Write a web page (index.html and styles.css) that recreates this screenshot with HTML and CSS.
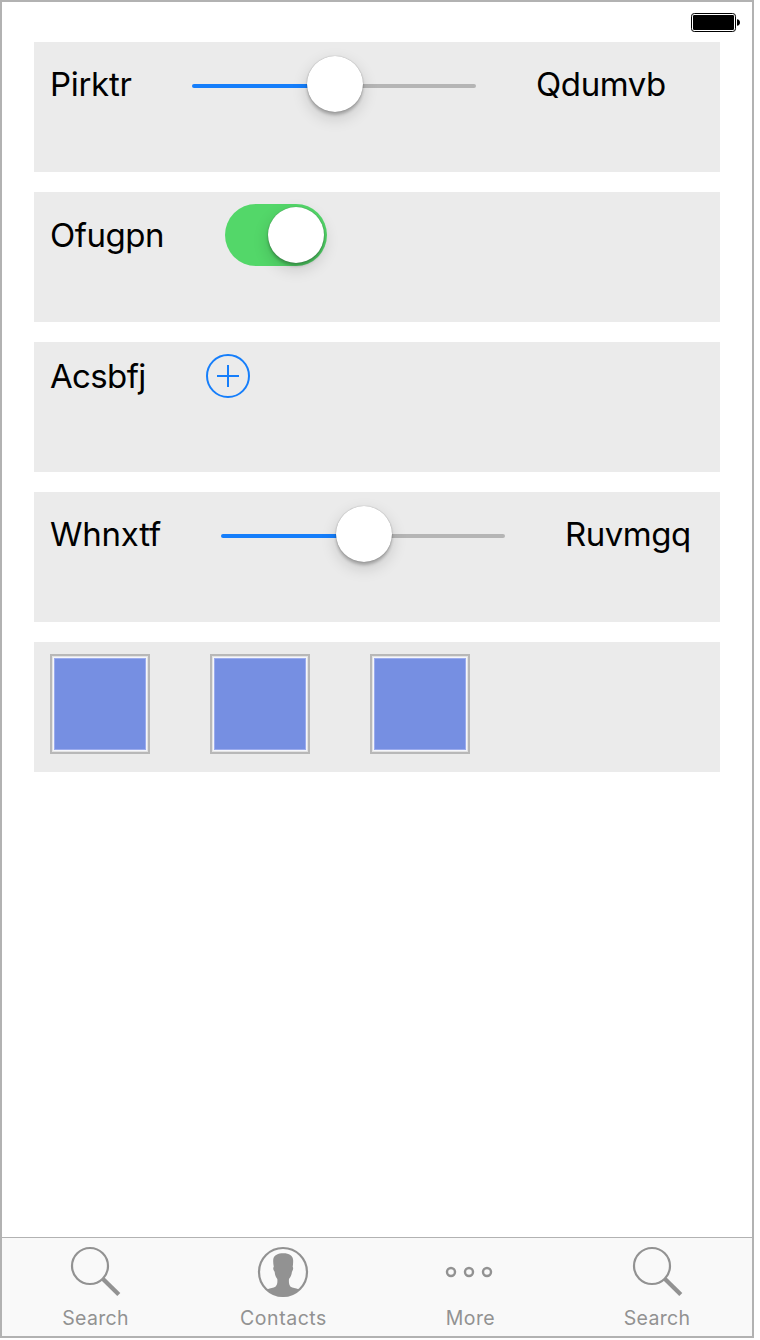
FILE: index.html
```html
<!DOCTYPE html>
<html lang="en">
<head>
<meta charset="utf-8">
<title>Controls</title>
<link rel="stylesheet" href="styles.css">
</head>
<body>
<div class="screen">
  <header class="status">
    <svg width="50" height="20" viewBox="0 0 50 20">
      <rect x=".5" y=".5" width="44" height="18" rx="2.8" fill="#fff" stroke="#000"/>
      <rect x="2" y="2" width="41" height="15" rx="1.2"/>
      <path d="M46 6.2c1.8.2 3 1.4 3 3.3s-1.200 3.100-3 3.300z"/>
    </svg>
  </header>
  <main class="rows">
    <section class="row">
      <span class="label w-pirktr">Pirktr</span>
      <div class="slider"><div class="track"></div><div class="thumb"></div></div>
      <span class="label w-qdumvb">Qdumvb</span>
    </section>
    <section class="row">
      <span class="label w-ofugpn">Ofugpn</span>
      <div class="switch"><div class="thumb knob"></div></div>
    </section>
    <section class="row">
      <span class="label w-acsbfj">Acsbfj</span>
      <svg class="add" width="44" height="44" viewBox="0 0 44 44" fill="none" stroke="#157efb" stroke-width="2">
        <circle cx="22" cy="22" r="21"/><path d="M22 11v22M11 22h22"/>
      </svg>
    </section>
    <section class="row">
      <span class="label w-whnxtf">Whnxtf</span>
      <div class="slider"><div class="track"></div><div class="thumb"></div></div>
      <span class="label w-ruvmgq">Ruvmgq</span>
    </section>
    <section class="row">
      <div class="swatch"></div><div class="swatch"></div><div class="swatch"></div>
    </section>
  </main>
  <nav class="tabs">
    <div class="tab">
      <svg width="52" height="52" viewBox="0 0 52 52" fill="none" stroke="#929292"><circle cx="20" cy="20" r="18" stroke-width="2.200"/><path d="M33 33l15.800 15.500" stroke-width="4.300"/></svg>
      <span class="t-search">Search</span>
    </div>
    <div class="tab">
      <svg width="52" height="52" viewBox="0 0 52 52"><circle cx="26" cy="26" r="24" fill="none" stroke="#929292" stroke-width="2.200"/><path fill="#929292" d="M16.300 13c.5-4 5-5.800 10-5.800 6 0 9.500 2.500 9.800 6.500.2 3-.1 5-.4 7 .8.8.5 4-.7 4.800-.4 3.500-1.500 5.800-3 7.500-.3 3 0 6 1.600 7.700 2 1.300 5 1.300 8 2.600C37.500 48 32 50.500 26 50.500S14.500 48 10.400 43.300c3-1.300 6-1.300 8-2.600 2-1.700 2.200-4.700 1.900-7.700-1.500-1.700-2.300-4-2.700-7.500-1.400-.8-1.800-4-.8-4.800-.5-2.500-.8-5-.5-7.700z"/></svg>
      <span class="t-contacts">Contacts</span>
    </div>
    <div class="tab">
      <svg width="52" height="52" viewBox="0 0 52 52" fill="none" stroke="#929292" stroke-width="2.400"><circle cx="7" cy="26" r="4"/><circle cx="25" cy="26" r="4"/><circle cx="43" cy="26" r="4"/></svg>
      <span class="t-more">More</span>
    </div>
    <div class="tab">
      <svg width="52" height="52" viewBox="0 0 52 52" fill="none" stroke="#929292"><circle cx="21" cy="20" r="18" stroke-width="2.200"/><path d="M34 33l15.800 15.500" stroke-width="4.300"/></svg>
      <span class="t-search">Search</span>
    </div>
  </nav>
</div>
</body>
</html>
```
FILE: styles.css
```css
* { box-sizing: border-box; }
body { margin: 0; background: #fff; font-family: Inter, "Liberation Sans", sans-serif; }
.screen { width: 754px; height: 1338px; border: 2px solid #b2b2b2; display: flex; flex-direction: column; }
.status { height: 40px; padding: 11px 11px 0 0; display: flex; justify-content: flex-end; align-items: flex-start; }
.rows { flex: 1; padding: 0 32px; display: flex; flex-direction: column; gap: 20px; }
.row { height: 130px; background: #ebebeb; padding: 12px 16px 0; display: flex; align-items: center; align-content: flex-start; flex-wrap: wrap; gap: 60px; }
.label { font-size: 33px; line-height: 40px; color: #000; white-space: nowrap; font-feature-settings: "calt" 0; }
.w-pirktr { width: 82px; letter-spacing: -.3px; }
.w-qdumvb { width: 130px; letter-spacing: -.4px; }
.w-ofugpn { width: 115px; letter-spacing: -.5px; }
.w-acsbfj { width: 96px; letter-spacing: -.65px; }
.w-whnxtf { width: 111px; letter-spacing: -.25px; }
.w-ruvmgq { width: 127px; letter-spacing: -.5px; }
.slider { width: 284px; height: 60px; display: grid; align-items: center; justify-items: center; }
.slider > * { grid-area: 1 / 1; }
.slider .thumb { margin-left: 2px; }
.track { width: 100%; height: 4px; margin-top: 4px; border-radius: 2px; background: linear-gradient(90deg, #157efb 50%, #b5b5b5 50%); }
.thumb { width: 56px; height: 56px; border-radius: 50%; background: #fff; box-shadow: 0 0 1px rgba(0,0,0,.4), 0 3px 3px rgba(0,0,0,.22), 0 6px 16px rgba(0,0,0,.16); }
.switch { width: 102px; height: 62px; padding: 3px; border-radius: 31px; background: #53d769; display: flex; justify-content: flex-end; }
.add { display: block; }
.swatch { width: 100px; height: 100px; border: 2px solid #b8b8b8; background: #768fe2; box-shadow: inset 0 0 0 1px #e3e3e3, inset 0 0 0 2px #f5f6fb, inset 0 0 0 3px #9babed; }
.tabs { height: 99px; border-top: 1px solid #b2b2b2; background: #f9f9f9; display: grid; grid-template-columns: 187px 188px 186px 188px; }
.tab { display: flex; flex-direction: column; align-items: center; padding-top: 8px; color: #929292; font-size: 19.500px; line-height: 24px; }
.tab svg { display: block; margin-bottom: 8px; }
.t-search { letter-spacing: .3px; }
.t-contacts { letter-spacing: .55px; padding-left: 1px; }
.t-more { letter-spacing: .4px; padding-left: 1px; }
```
